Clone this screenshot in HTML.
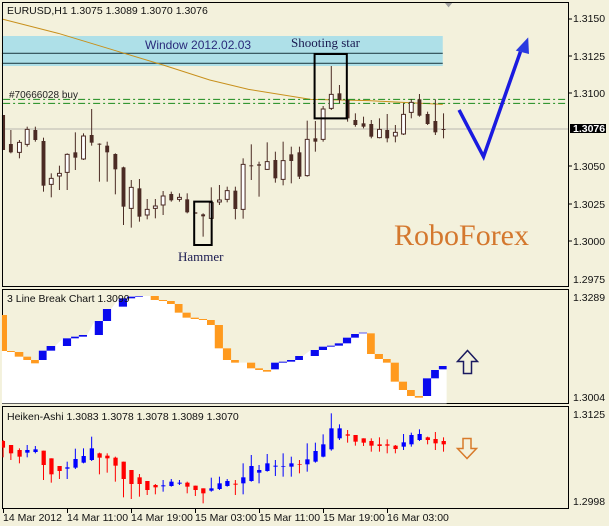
<!DOCTYPE html>
<html><head><meta charset="utf-8"><style>
html,body{margin:0;padding:0;background:#f3f1dc;}
svg{display:block}
text{font-family:"Liberation Sans",sans-serif;font-size:10.5px;fill:#111}
.ser{font-family:"Liberation Serif",serif}
</style></head><body>
<svg width="609" height="526" viewBox="0 0 609 526" xmlns="http://www.w3.org/2000/svg">
<rect width="609" height="526" fill="#f3f1dc"/>
<!-- MAIN PANEL (zoom coords) -->
<g transform="scale(0.38838,0.33333)">
 <rect x="5" y="108" width="1135" height="90" fill="#aee0e8"/>
 <line x1="5" y1="160" x2="1140" y2="160" stroke="#2a4a50" stroke-width="1.2" vector-effect="non-scaling-stroke"/>
 <line x1="5" y1="190" x2="1140" y2="190" stroke="#2a4a50" stroke-width="1.2" vector-effect="non-scaling-stroke"/>
 <polyline points="5,57 150,100 320,160 420,195 540,240 640,268 800,298 950,302 1140,313" fill="none" stroke="#c8901c" stroke-width="1" vector-effect="non-scaling-stroke"/>
 <line x1="8" y1="298" x2="1460" y2="298" stroke="#1a8a1a" stroke-width="1" stroke-dasharray="7,3,2,3" vector-effect="non-scaling-stroke"/>
 <line x1="8" y1="310" x2="1460" y2="310" stroke="#1a8a1a" stroke-width="1" stroke-dasharray="7,3,2,3" vector-effect="non-scaling-stroke"/>
 <line x1="5" y1="387" x2="1465" y2="387" stroke="#b8b8b0" stroke-width="1" vector-effect="non-scaling-stroke"/>
 <g stroke="#4b2b24" stroke-width="1" vector-effect="non-scaling-stroke">
  <line x1="8" y1="345" x2="8" y2="450" vector-effect="non-scaling-stroke"/>
  <line x1="28" y1="390" x2="28" y2="460" vector-effect="non-scaling-stroke"/>
  <line x1="50" y1="420" x2="50" y2="475" vector-effect="non-scaling-stroke"/>
  <line x1="70" y1="380" x2="70" y2="440" vector-effect="non-scaling-stroke"/>
  <line x1="91" y1="380" x2="91" y2="425" vector-effect="non-scaling-stroke"/>
  <line x1="112" y1="413" x2="112" y2="575" vector-effect="non-scaling-stroke"/>
  <line x1="132" y1="520" x2="132" y2="592" vector-effect="non-scaling-stroke"/>
  <line x1="153" y1="497" x2="153" y2="570" vector-effect="non-scaling-stroke"/>
  <line x1="173" y1="460" x2="173" y2="570" vector-effect="non-scaling-stroke"/>
  <line x1="194" y1="397" x2="194" y2="510" vector-effect="non-scaling-stroke"/>
  <line x1="215" y1="400" x2="215" y2="480" vector-effect="non-scaling-stroke"/>
  <line x1="236" y1="327" x2="236" y2="437" vector-effect="non-scaling-stroke"/>
  <line x1="256" y1="430" x2="256" y2="545" vector-effect="non-scaling-stroke"/>
  <line x1="276" y1="425" x2="276" y2="545" vector-effect="non-scaling-stroke"/>
  <line x1="297" y1="460" x2="297" y2="583" vector-effect="non-scaling-stroke"/>
  <line x1="318" y1="500" x2="318" y2="675" vector-effect="non-scaling-stroke"/>
  <line x1="338" y1="540" x2="338" y2="683" vector-effect="non-scaling-stroke"/>
  <line x1="359" y1="537" x2="359" y2="665" vector-effect="non-scaling-stroke"/>
  <line x1="379" y1="597" x2="379" y2="658" vector-effect="non-scaling-stroke"/>
  <line x1="400" y1="597" x2="400" y2="655" vector-effect="non-scaling-stroke"/>
  <line x1="420" y1="573" x2="420" y2="645" vector-effect="non-scaling-stroke"/>
  <line x1="441" y1="575" x2="441" y2="605" vector-effect="non-scaling-stroke"/>
  <line x1="462" y1="580" x2="462" y2="605" vector-effect="non-scaling-stroke"/>
  <line x1="482" y1="580" x2="482" y2="640" vector-effect="non-scaling-stroke"/>
  <line x1="523" y1="640" x2="523" y2="710" vector-effect="non-scaling-stroke"/>
  <line x1="544" y1="562" x2="544" y2="655" vector-effect="non-scaling-stroke"/>
  <line x1="565" y1="555" x2="565" y2="615" vector-effect="non-scaling-stroke"/>
  <line x1="585" y1="560" x2="585" y2="607" vector-effect="non-scaling-stroke"/>
  <line x1="606" y1="560" x2="606" y2="658" vector-effect="non-scaling-stroke"/>
  <line x1="626" y1="475" x2="626" y2="656" vector-effect="non-scaling-stroke"/>
  <line x1="647" y1="433" x2="647" y2="540" vector-effect="non-scaling-stroke"/>
  <line x1="667" y1="485" x2="667" y2="590" vector-effect="non-scaling-stroke"/>
  <line x1="688" y1="427" x2="688" y2="510" vector-effect="non-scaling-stroke"/>
  <line x1="709" y1="455" x2="709" y2="548" vector-effect="non-scaling-stroke"/>
  <line x1="729" y1="425" x2="729" y2="556" vector-effect="non-scaling-stroke"/>
  <line x1="750" y1="440" x2="750" y2="550" vector-effect="non-scaling-stroke"/>
  <line x1="771" y1="440" x2="771" y2="537" vector-effect="non-scaling-stroke"/>
  <line x1="791" y1="362" x2="791" y2="530" vector-effect="non-scaling-stroke"/>
  <line x1="812" y1="363" x2="812" y2="455" vector-effect="non-scaling-stroke"/>
  <line x1="832" y1="318" x2="832" y2="425" vector-effect="non-scaling-stroke"/>
  <line x1="853" y1="198" x2="853" y2="330" vector-effect="non-scaling-stroke"/>
  <line x1="874" y1="255" x2="874" y2="310" vector-effect="non-scaling-stroke"/>
  <line x1="895" y1="297" x2="895" y2="365" vector-effect="non-scaling-stroke"/>
  <line x1="915" y1="340" x2="915" y2="380" vector-effect="non-scaling-stroke"/>
  <line x1="936" y1="350" x2="936" y2="385" vector-effect="non-scaling-stroke"/>
  <line x1="956" y1="360" x2="956" y2="415" vector-effect="non-scaling-stroke"/>
  <line x1="977" y1="355" x2="977" y2="415" vector-effect="non-scaling-stroke"/>
  <line x1="997" y1="342" x2="997" y2="427" vector-effect="non-scaling-stroke"/>
  <line x1="1018" y1="375" x2="1018" y2="427" vector-effect="non-scaling-stroke"/>
  <line x1="1039" y1="310" x2="1039" y2="405" vector-effect="non-scaling-stroke"/>
  <line x1="1059" y1="297" x2="1059" y2="355" vector-effect="non-scaling-stroke"/>
  <line x1="1080" y1="282" x2="1080" y2="350" vector-effect="non-scaling-stroke"/>
  <line x1="1101" y1="335" x2="1101" y2="375" vector-effect="non-scaling-stroke"/>
  <line x1="1121" y1="298" x2="1121" y2="405" vector-effect="non-scaling-stroke"/>
  <line x1="1142" y1="340" x2="1142" y2="415" vector-effect="non-scaling-stroke"/>
 </g>
 <g fill="#4b2b24">
  <rect x="5" y="345" width="8" height="105"/>
  <rect x="23" y="432" width="10" height="25"/>
  <rect x="86" y="390" width="10" height="30"/>
  <rect x="107" y="423" width="10" height="134"/>
  <rect x="189" y="457" width="10" height="16"/>
  <rect x="231" y="405" width="10" height="23"/>
  <rect x="251" y="431" width="10" height="3"/>
  <rect x="271" y="437" width="10" height="20"/>
  <rect x="292" y="462" width="10" height="46"/>
  <rect x="313" y="502" width="10" height="118"/>
  <rect x="354" y="565" width="10" height="85"/>
  <rect x="436" y="582" width="10" height="19"/>
  <rect x="477" y="598" width="10" height="39"/>
  <rect x="498" y="637" width="10" height="4"/>
  <rect x="518" y="643" width="10" height="6"/>
  <rect x="601" y="572" width="10" height="55"/>
  <rect x="642" y="496" width="10" height="3"/>
  <rect x="662" y="493" width="10" height="4"/>
  <rect x="704" y="480" width="10" height="55"/>
  <rect x="745" y="463" width="10" height="20"/>
  <rect x="766" y="457" width="10" height="73"/>
  <rect x="807" y="415" width="10" height="10"/>
  <rect x="869" y="280" width="10" height="20"/>
  <rect x="890" y="300" width="10" height="55"/>
  <rect x="910" y="360" width="10" height="15"/>
  <rect x="931" y="370" width="10" height="10"/>
  <rect x="951" y="372" width="10" height="38"/>
  <rect x="992" y="390" width="10" height="25"/>
  <rect x="1075" y="298" width="10" height="49"/>
  <rect x="1096" y="342" width="10" height="30"/>
  <rect x="1116" y="363" width="10" height="34"/>
  <rect x="1137" y="387" width="10" height="3"/>
 </g>
 <g fill="#fff" stroke="#4b2b24" stroke-width="1" >
  <rect x="45" y="427" width="10" height="30" vector-effect="non-scaling-stroke"/>
  <rect x="65" y="388" width="10" height="45" vector-effect="non-scaling-stroke"/>
  <rect x="127" y="535" width="10" height="18" vector-effect="non-scaling-stroke"/>
  <rect x="148" y="520" width="10" height="8" vector-effect="non-scaling-stroke"/>
  <rect x="168" y="463" width="10" height="54" vector-effect="non-scaling-stroke"/>
  <rect x="210" y="408" width="10" height="69" vector-effect="non-scaling-stroke"/>
  <rect x="333" y="562" width="10" height="63" vector-effect="non-scaling-stroke"/>
  <rect x="374" y="628" width="10" height="17" vector-effect="non-scaling-stroke"/>
  <rect x="395" y="618" width="10" height="7" vector-effect="non-scaling-stroke"/>
  <rect x="415" y="588" width="10" height="27" vector-effect="non-scaling-stroke"/>
  <rect x="457" y="592" width="10" height="6" vector-effect="non-scaling-stroke"/>
  <rect x="539" y="608" width="10" height="47" vector-effect="non-scaling-stroke"/>
  <rect x="560" y="600" width="10" height="6" vector-effect="non-scaling-stroke"/>
  <rect x="580" y="572" width="10" height="26" vector-effect="non-scaling-stroke"/>
  <rect x="621" y="493" width="10" height="135" vector-effect="non-scaling-stroke"/>
  <rect x="683" y="485" width="10" height="23" vector-effect="non-scaling-stroke"/>
  <rect x="724" y="482" width="10" height="56" vector-effect="non-scaling-stroke"/>
  <rect x="786" y="418" width="10" height="109" vector-effect="non-scaling-stroke"/>
  <rect x="827" y="327" width="10" height="91" vector-effect="non-scaling-stroke"/>
  <rect x="848" y="283" width="10" height="42" vector-effect="non-scaling-stroke"/>
  <rect x="972" y="388" width="10" height="25" vector-effect="non-scaling-stroke"/>
  <rect x="1013" y="397" width="10" height="11" vector-effect="non-scaling-stroke"/>
  <rect x="1034" y="343" width="10" height="59" vector-effect="non-scaling-stroke"/>
  <rect x="1054" y="307" width="10" height="30" vector-effect="non-scaling-stroke"/>
 </g>
 <rect x="810" y="162" width="83" height="193" fill="none" stroke="#000" stroke-width="2" vector-effect="non-scaling-stroke"/>
 <rect x="500" y="605" width="45" height="130" fill="none" stroke="#000" stroke-width="2" vector-effect="non-scaling-stroke"/>
 <polyline points="1182,330 1245,470 1340,155" fill="none" stroke="#1a1ae0" stroke-width="3.5" vector-effect="non-scaling-stroke"/>
 <polygon points="1360,112 1328,152 1362,162" fill="#2a3ae0"/>
 <polygon points="1145,8 1165,8 1155,22" fill="#a0a0a0"/>
</g>
<!-- panel borders -->
<rect x="2.5" y="2.5" width="566" height="284" fill="none" stroke="#000" stroke-width="1"/>
<rect x="2.5" y="289.5" width="566" height="114" fill="none" stroke="#000" stroke-width="1"/>
<rect x="2.5" y="406.5" width="566" height="102" fill="none" stroke="#000" stroke-width="1"/>
<!-- panel 2 -->
<g transform="translate(0,280) scale(0.38838,0.33333)">
 <polygon fill="#fff" points="5,105 18,213 38,216 60,230 80,240 100,240 100,212 120,212 120,198 142,198 162,175 183,175 183,170 203,170 203,165 224,165 244,123 265,123 265,87 286,87 306,55 327,55 327,50 348,50 348,48 388,48 409,60 430,63 450,72 470,98 491,113 512,117 533,120 553,135 574,205 595,240 615,248 636,248 657,265 677,270 698,275 698,248 718,248 718,245 739,245 739,240 760,240 760,228 780,228 800,210 821,210 821,200 842,200 842,197 862,197 862,190 883,190 883,173 904,173 904,162 924,162 924,158 945,158 945,160 965,222 986,237 1006,248 1027,305 1048,330 1068,348 1089,353 1089,295 1110,295 1110,270 1130,270 1130,258 1150,258 1150,370 5,370"/>
 <g fill="#ff9a1e">
  <rect x="5" y="105" width="13" height="108"/><rect x="18" y="213" width="20" height="3"/><rect x="38" y="216" width="22" height="14"/><rect x="60" y="230" width="20" height="10"/><rect x="80" y="240" width="20" height="10"/>
  <rect x="388" y="48" width="21" height="12"/><rect x="409" y="60" width="21" height="3"/><rect x="430" y="63" width="20" height="9"/><rect x="450" y="72" width="20" height="26"/><rect x="470" y="98" width="21" height="15"/><rect x="491" y="113" width="21" height="4"/><rect x="512" y="117" width="21" height="3"/><rect x="533" y="120" width="20" height="15"/><rect x="553" y="135" width="21" height="70"/><rect x="574" y="205" width="21" height="35"/><rect x="595" y="240" width="20" height="8"/><rect x="636" y="248" width="21" height="17"/><rect x="657" y="265" width="20" height="5"/><rect x="677" y="270" width="21" height="5"/>
  <rect x="945" y="160" width="20" height="62"/><rect x="965" y="222" width="21" height="15"/><rect x="986" y="237" width="20" height="11"/><rect x="1006" y="248" width="21" height="57"/><rect x="1027" y="305" width="21" height="25"/><rect x="1048" y="330" width="20" height="18"/><rect x="1068" y="348" width="21" height="5"/>
 </g>
 <g fill="#0a0aee">
  <rect x="100" y="212" width="20" height="28"/><rect x="120" y="198" width="22" height="14"/><rect x="162" y="175" width="21" height="23"/><rect x="183" y="170" width="20" height="5"/><rect x="203" y="165" width="21" height="5"/><rect x="244" y="123" width="21" height="42"/><rect x="265" y="87" width="21" height="36"/><rect x="306" y="55" width="21" height="25"/><rect x="327" y="50" width="21" height="5"/><rect x="348" y="48" width="20" height="2"/>
  <rect x="698" y="248" width="20" height="20"/><rect x="718" y="245" width="21" height="3"/><rect x="739" y="240" width="21" height="5"/><rect x="760" y="228" width="20" height="12"/><rect x="800" y="210" width="21" height="18"/><rect x="821" y="200" width="21" height="10"/><rect x="842" y="197" width="20" height="3"/><rect x="862" y="190" width="21" height="7"/><rect x="883" y="173" width="21" height="17"/><rect x="904" y="162" width="20" height="11"/><rect x="924" y="158" width="21" height="2"/>
  <rect x="1089" y="295" width="21" height="53"/><rect x="1110" y="270" width="20" height="25"/><rect x="1130" y="258" width="20" height="10"/>
 </g>
</g>
<!-- up arrow -->
<path d="M467.5,350.5 L457.5,361.5 L463.5,361.5 L463.5,373.5 L471.5,373.5 L471.5,361.5 L477.5,361.5 Z" fill="#f3f1dc" stroke="#1a1a60" stroke-width="1.5"/>
<!-- down arrow -->
<path d="M467,458.5 L457.5,448.5 L463,448.5 L463,438.5 L471,438.5 L471,448.5 L476.5,448.5 Z" fill="#f3f1dc" stroke="#d87a2a" stroke-width="1.5"/>
<!-- panel 3 -->
<g transform="translate(0,280) scale(0.38838,0.33333)">
 <g stroke-width="1">
  <g stroke="#f00">
   <line x1="8" y1="480" x2="8" y2="532" vector-effect="non-scaling-stroke"/><line x1="28" y1="495" x2="28" y2="540" vector-effect="non-scaling-stroke"/><line x1="50" y1="505" x2="50" y2="550" vector-effect="non-scaling-stroke"/><line x1="112" y1="512" x2="112" y2="600" vector-effect="non-scaling-stroke"/><line x1="132" y1="535" x2="132" y2="608" vector-effect="non-scaling-stroke"/><line x1="153" y1="558" x2="153" y2="597" vector-effect="non-scaling-stroke"/><line x1="256" y1="518" x2="256" y2="583" vector-effect="non-scaling-stroke"/><line x1="276" y1="520" x2="276" y2="578" vector-effect="non-scaling-stroke"/><line x1="297" y1="530" x2="297" y2="605" vector-effect="non-scaling-stroke"/><line x1="318" y1="545" x2="318" y2="652" vector-effect="non-scaling-stroke"/><line x1="338" y1="570" x2="338" y2="657" vector-effect="non-scaling-stroke"/><line x1="359" y1="582" x2="359" y2="650" vector-effect="non-scaling-stroke"/><line x1="379" y1="603" x2="379" y2="645" vector-effect="non-scaling-stroke"/><line x1="400" y1="612" x2="400" y2="643" vector-effect="non-scaling-stroke"/><line x1="482" y1="605" x2="482" y2="640" vector-effect="non-scaling-stroke"/><line x1="503" y1="617" x2="503" y2="648" vector-effect="non-scaling-stroke"/><line x1="523" y1="625" x2="523" y2="670" vector-effect="non-scaling-stroke"/><line x1="606" y1="600" x2="606" y2="645" vector-effect="non-scaling-stroke"/><line x1="771" y1="540" x2="771" y2="580" vector-effect="non-scaling-stroke"/><line x1="895" y1="450" x2="895" y2="488" vector-effect="non-scaling-stroke"/><line x1="915" y1="465" x2="915" y2="497" vector-effect="non-scaling-stroke"/><line x1="936" y1="475" x2="936" y2="498" vector-effect="non-scaling-stroke"/><line x1="956" y1="475" x2="956" y2="515" vector-effect="non-scaling-stroke"/><line x1="977" y1="472" x2="977" y2="515" vector-effect="non-scaling-stroke"/><line x1="997" y1="478" x2="997" y2="520" vector-effect="non-scaling-stroke"/><line x1="1018" y1="495" x2="1018" y2="520" vector-effect="non-scaling-stroke"/><line x1="1101" y1="470" x2="1101" y2="493" vector-effect="non-scaling-stroke"/><line x1="1121" y1="456" x2="1121" y2="510" vector-effect="non-scaling-stroke"/><line x1="1142" y1="472" x2="1142" y2="515" vector-effect="non-scaling-stroke"/>
  </g>
  <g stroke="#00f">
   <line x1="70" y1="495" x2="70" y2="532" vector-effect="non-scaling-stroke"/><line x1="91" y1="498" x2="91" y2="520" vector-effect="non-scaling-stroke"/><line x1="173" y1="545" x2="173" y2="597" vector-effect="non-scaling-stroke"/><line x1="194" y1="506" x2="194" y2="567" vector-effect="non-scaling-stroke"/><line x1="215" y1="505" x2="215" y2="550" vector-effect="non-scaling-stroke"/><line x1="236" y1="470" x2="236" y2="543" vector-effect="non-scaling-stroke"/><line x1="420" y1="600" x2="420" y2="635" vector-effect="non-scaling-stroke"/><line x1="441" y1="597" x2="441" y2="620" vector-effect="non-scaling-stroke"/><line x1="462" y1="600" x2="462" y2="615" vector-effect="non-scaling-stroke"/><line x1="544" y1="593" x2="544" y2="635" vector-effect="non-scaling-stroke"/><line x1="565" y1="590" x2="565" y2="630" vector-effect="non-scaling-stroke"/><line x1="585" y1="597" x2="585" y2="620" vector-effect="non-scaling-stroke"/><line x1="626" y1="550" x2="626" y2="643" vector-effect="non-scaling-stroke"/><line x1="647" y1="525" x2="647" y2="605" vector-effect="non-scaling-stroke"/><line x1="667" y1="555" x2="667" y2="610" vector-effect="non-scaling-stroke"/><line x1="688" y1="522" x2="688" y2="575" vector-effect="non-scaling-stroke"/><line x1="709" y1="540" x2="709" y2="588" vector-effect="non-scaling-stroke"/><line x1="729" y1="520" x2="729" y2="590" vector-effect="non-scaling-stroke"/><line x1="750" y1="530" x2="750" y2="590" vector-effect="non-scaling-stroke"/><line x1="791" y1="490" x2="791" y2="575" vector-effect="non-scaling-stroke"/><line x1="812" y1="488" x2="812" y2="548" vector-effect="non-scaling-stroke"/><line x1="832" y1="463" x2="832" y2="532" vector-effect="non-scaling-stroke"/><line x1="853" y1="400" x2="853" y2="512" vector-effect="non-scaling-stroke"/><line x1="874" y1="433" x2="874" y2="480" vector-effect="non-scaling-stroke"/><line x1="1039" y1="462" x2="1039" y2="510" vector-effect="non-scaling-stroke"/><line x1="1059" y1="458" x2="1059" y2="500" vector-effect="non-scaling-stroke"/><line x1="1080" y1="448" x2="1080" y2="483" vector-effect="non-scaling-stroke"/>
  </g>
 </g>
 <g fill="#f00">
  <rect x="5" y="483" width="8" height="20"/><rect x="23" y="495" width="11" height="25"/><rect x="45" y="510" width="11" height="20"/><rect x="107" y="512" width="11" height="43"/><rect x="127" y="535" width="11" height="48"/><rect x="148" y="558" width="11" height="15"/><rect x="251" y="520" width="11" height="13"/><rect x="271" y="527" width="11" height="8"/><rect x="292" y="533" width="11" height="24"/><rect x="313" y="545" width="11" height="52"/><rect x="333" y="570" width="11" height="42"/><rect x="354" y="592" width="11" height="20"/><rect x="374" y="603" width="11" height="27"/><rect x="395" y="615" width="11" height="7"/><rect x="477" y="608" width="11" height="12"/><rect x="498" y="617" width="11" height="13"/><rect x="518" y="625" width="11" height="15"/><rect x="601" y="611" width="11" height="3"/><rect x="766" y="552" width="11" height="2"/><rect x="890" y="463" width="11" height="4"/><rect x="910" y="465" width="11" height="20"/><rect x="931" y="475" width="11" height="13"/><rect x="951" y="483" width="11" height="14"/><rect x="972" y="493" width="11" height="5"/><rect x="992" y="493" width="11" height="4"/><rect x="1013" y="497" width="11" height="10"/><rect x="1096" y="472" width="11" height="8"/><rect x="1116" y="477" width="11" height="13"/><rect x="1137" y="483" width="11" height="10"/>
 </g>
 <g fill="#00f">
  <rect x="65" y="510" width="11" height="8"/><rect x="86" y="508" width="11" height="8"/><rect x="168" y="562" width="11" height="4"/><rect x="189" y="537" width="11" height="26"/><rect x="210" y="528" width="11" height="20"/><rect x="231" y="505" width="11" height="35"/><rect x="415" y="616" width="11" height="3"/><rect x="436" y="605" width="11" height="13"/><rect x="457" y="608" width="11" height="3"/><rect x="539" y="625" width="11" height="7"/><rect x="560" y="610" width="11" height="17"/><rect x="580" y="603" width="11" height="15"/><rect x="621" y="592" width="11" height="18"/><rect x="642" y="558" width="11" height="45"/><rect x="662" y="570" width="11" height="8"/><rect x="683" y="550" width="11" height="23"/><rect x="704" y="557" width="11" height="3"/><rect x="724" y="558" width="11" height="2"/><rect x="745" y="550" width="11" height="10"/><rect x="786" y="538" width="11" height="15"/><rect x="807" y="513" width="11" height="32"/><rect x="827" y="493" width="11" height="37"/><rect x="848" y="445" width="11" height="63"/><rect x="869" y="445" width="11" height="30"/><rect x="1034" y="487" width="11" height="13"/><rect x="1054" y="465" width="11" height="28"/><rect x="1075" y="462" width="11" height="18"/>
 </g>
</g>
<!-- texts main -->
<text x="7" y="14">EURUSD,H1  1.3075 1.3089 1.3070 1.3076</text>
<text x="145" y="49" class="ser" style="font-family:'Liberation Sans',sans-serif;font-size:12px;fill:#2a2a7a">Window 2012.02.03</text>
<text x="291" y="47" class="ser" style="font-size:13px;fill:#1a1a50">Shooting star</text>
<text x="9" y="98" style="font-size:10px;fill:#222">#70666028 buy</text>
<text x="178" y="261" class="ser" style="font-size:13px;fill:#1a1a50">Hammer</text>
<text x="394" y="245" class="ser" style="font-size:30px;fill:#d4782e">RoboForex</text>
<text x="7" y="302">3 Line Break Chart 1.3099</text>
<text x="7" y="420">Heiken-Ashi 1.3083 1.3078 1.3078 1.3089 1.3070</text>
<!-- axis labels -->
<g>
<text x="573" y="22">1.3150</text>
<text x="573" y="60">1.3125</text>
<text x="573" y="97">1.3100</text>
<text x="573" y="170">1.3050</text>
<text x="573" y="208">1.3025</text>
<text x="573" y="245">1.3000</text>
<text x="573" y="283">1.2975</text>
<rect x="570" y="124" width="36" height="9" fill="#000"/>
<text x="573" y="132" style="fill:#fff;font-weight:bold">1.3076</text>
<text x="573" y="301">1.3289</text>
<text x="573" y="401">1.3004</text>
<text x="573" y="418">1.3125</text>
<text x="573" y="505">1.2998</text>
</g>
<g stroke="#000" stroke-width="1">
<line x1="569" y1="19" x2="572" y2="19"/><line x1="569" y1="56" x2="572" y2="56"/><line x1="569" y1="93" x2="572" y2="93"/><line x1="569" y1="166" x2="572" y2="166"/><line x1="569" y1="204" x2="572" y2="204"/><line x1="569" y1="241" x2="572" y2="241"/>
<line x1="3.5" y1="509" x2="3.5" y2="513"/><line x1="67.5" y1="509" x2="67.5" y2="513"/><line x1="131.5" y1="509" x2="131.5" y2="513"/><line x1="195.5" y1="509" x2="195.5" y2="513"/><line x1="259.5" y1="509" x2="259.5" y2="513"/><line x1="323.5" y1="509" x2="323.5" y2="513"/><line x1="387.5" y1="509" x2="387.5" y2="513"/>
</g>
<text x="3" y="521">14 Mar 2012</text>
<text x="67" y="521">14 Mar 11:00</text>
<text x="131" y="521">14 Mar 19:00</text>
<text x="195" y="521">15 Mar 03:00</text>
<text x="259" y="521">15 Mar 11:00</text>
<text x="323" y="521">15 Mar 19:00</text>
<text x="387" y="521">16 Mar 03:00</text>
</svg>
</body></html>
